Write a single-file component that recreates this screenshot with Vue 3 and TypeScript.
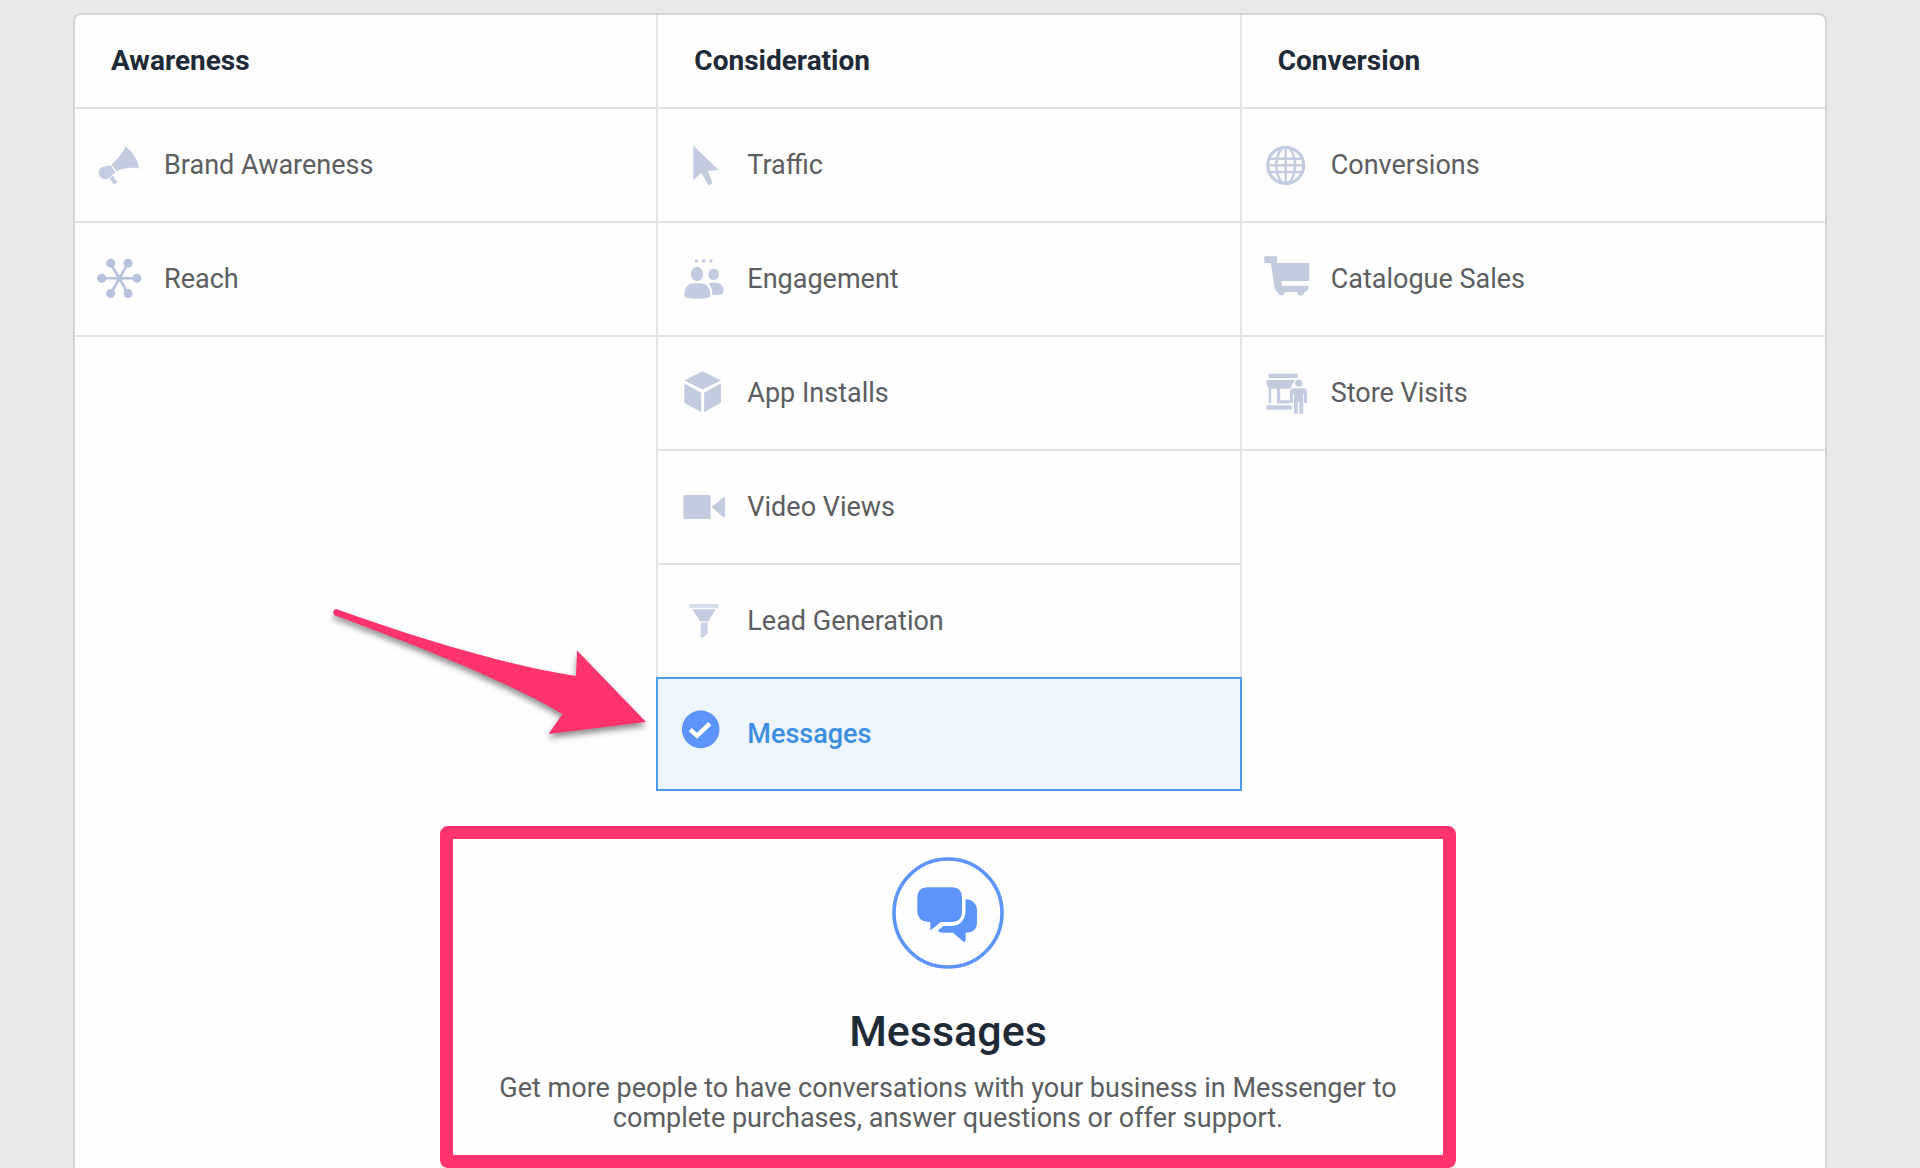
<script setup lang="ts">
import { ref } from 'vue'

type IconName =
  | 'megaphone' | 'reach' | 'cursor' | 'people' | 'cube' | 'video'
  | 'funnel' | 'check' | 'globe' | 'cart' | 'store'

interface Objective { label: string; icon: IconName }
interface Column { title: string; items: Objective[] }

const selected = ref('Messages')

const columns: Column[] = [
  {
    title: 'Awareness',
    items: [
      { label: 'Brand Awareness', icon: 'megaphone' },
      { label: 'Reach', icon: 'reach' },
    ],
  },
  {
    title: 'Consideration',
    items: [
      { label: 'Traffic', icon: 'cursor' },
      { label: 'Engagement', icon: 'people' },
      { label: 'App Installs', icon: 'cube' },
      { label: 'Video Views', icon: 'video' },
      { label: 'Lead Generation', icon: 'funnel' },
      { label: 'Messages', icon: 'check' },
    ],
  },
  {
    title: 'Conversion',
    items: [
      { label: 'Conversions', icon: 'globe' },
      { label: 'Catalogue Sales', icon: 'cart' },
      { label: 'Store Visits', icon: 'store' },
    ],
  },
]

const reachDots: [number, number][] = [
  [6.7, 23.3], [42, 23.3], [15.7, 8.3], [33, 8.3], [15.7, 38.5], [33, 38.5],
]
</script>

<template>
  <main class="page">
    <div class="card">
      <div class="columns">
        <section v-for="column in columns" :key="column.title" class="column">
          <h2 class="column-title">{{ column.title }}</h2>
          <ul class="list">
            <li v-for="item in column.items" :key="item.label" class="entry">
              <button
                type="button"
                class="objective"
                :class="{ selected: item.label === selected }"
                :aria-pressed="item.label === selected"
                @click="selected = item.label"
              >
                <svg class="icon" viewBox="0 0 48 48" aria-hidden="true">
                  <g v-if="item.icon === 'megaphone'">
                    <path d="M30.7 5.5C38 11 43 19 44 27.6C36 26 28 27 21.6 30.6L16.6 23.4C22 19 27 13 30.7 5.5Z" />
                    <path d="M15.8 24.2L20.4 31.6L14.6 36.2A6.4 6.4 0 1 1 9.2 25.4Z" />
                    <path d="M14.6 37.2L18.2 34.8L20.2 38.8L22.4 40.2L21 42.8L18.4 42.8Z" />
                  </g>
                  <g v-else-if="item.icon === 'reach'" class="reach">
                    <path d="M6.7 23.3H42M15.7 8.3L33 38.5M33 8.3L15.7 38.5" fill="none" stroke="currentColor" stroke-width="2.6" />
                    <circle cx="24.3" cy="23.3" r="3.4" />
                    <circle v-for="(dot, i) in reachDots" :key="i" :cx="dot[0]" :cy="dot[1]" r="4.5" />
                  </g>
                  <path v-else-if="item.icon === 'cursor'" d="M15.3 4.5L40.5 29L29.7 29.9L34.5 41.8L31 44.7L23.3 31.7L15.3 39.5Z" />
                  <g v-else-if="item.icon === 'people'">
                    <circle cx="18.3" cy="6" r="1.7" />
                    <circle cx="25.7" cy="6" r="1.9" />
                    <circle cx="33" cy="6" r="1.7" />
                    <ellipse cx="19" cy="19" rx="6.2" ry="7.2" />
                    <ellipse cx="35.7" cy="19.4" rx="5.2" ry="5.8" />
                    <path d="M6.3 39C6.3 32.5 10.5 28.3 15.5 28.3H23C28 28.3 32.3 32.5 32.3 39V40.5C32.3 42.6 29 43.7 19.3 43.7C9.5 43.7 6.3 42.6 6.3 40.5Z" />
                    <path d="M30.5 28.4C32 27.8 33.5 27.7 35 27.7H38C42.5 27.7 45.7 31 45.7 35.5V36.5C45.7 39.4 41.5 40.2 34.2 40C34.4 35 33.5 31.5 30.5 28.4Z" />
                  </g>
                  <g v-else-if="item.icon === 'cube'">
                    <path d="M24.7 2.3L43 11.4L24.7 20.6L6.3 11.4Z" />
                    <path d="M6.3 14.6L23.2 23.7V43.2L6.3 33.8Z" />
                    <path d="M43 14.6L26.1 23.7V43.2L43 33.8Z" />
                  </g>
                  <g v-else-if="item.icon === 'video'">
                    <rect x="5.3" y="12" width="27.4" height="24" rx="1" />
                    <path d="M33.6 24L44 15.4L47 13.7V35L44 33Z" />
                  </g>
                  <g v-else-if="item.icon === 'funnel'">
                    <rect x="11.3" y="7" width="29" height="3.8" opacity="0.7" />
                    <path d="M14.3 12.2H37.8L30.4 24.2H22Z" />
                    <path d="M22.7 25.6H29.7V36.4L25.2 40.4H22.7Z" opacity="0.85" />
                  </g>
                  <g v-else-if="item.icon === 'check'">
                    <circle cx="22.7" cy="19.4" r="18.8" class="check-disc" />
                    <path d="M12.2 19.6L19 25.8L31.8 13.6" fill="none" stroke="#fff" stroke-width="4.4" />
                  </g>
                  <g v-else-if="item.icon === 'globe'" fill="none" stroke="currentColor" stroke-width="2.4">
                    <circle cx="23.7" cy="24.3" r="18" stroke-width="3.2" />
                    <ellipse cx="23.7" cy="24.3" rx="9.4" ry="18" />
                    <path d="M23.7 6V42.6M5.7 24.3H41.7M8.2 17.8H39.2M8.2 31H39.2" />
                  </g>
                  <path
                    v-else-if="item.icon === 'cart'"
                    d="M2.3 1.3H15V8H47.3V26H19.7V30.7H46.8L45.6 35.4L43.5 37H42.2A3.4 3.4 0 0 1 35.4 37.4L34.5 37H23.6L22.5 38A3.4 3.4 0 0 1 16 38L13 34.6L8.8 8H2.3Z"
                  />
                  <g v-else-if="item.icon === 'store'">
                    <path d="M6.6 4.7H36V8.9H6.6ZM4.5 11H33L30 15.7L28.5 19.7H9.2V34.3H6.6V19L4.5 15.7Z" />
                    <path d="M15 19V34.5H27.6V31.2H18.2V19ZM4.5 36.3H29.8V40.8H4.5Z" />
                    <circle cx="36.8" cy="14.2" r="3.6" />
                    <path d="M32 19.3H41.4C43.8 19.3 45 20.8 45 23V34H42V25H41.2V44.8H37.3V33H35.8V44.8H32V25H31V34H27.8V23C27.8 20.8 29.4 19.3 32 19.3Z" />
                  </g>
                </svg>
                <span>{{ item.label }}</span>
              </button>
            </li>
          </ul>
        </section>
      </div>

      <section class="detail">
        <svg class="badge" viewBox="0 0 112 112" aria-hidden="true">
          <circle cx="56" cy="56" r="54" fill="none" stroke="currentColor" stroke-width="3.6" />
          <path d="M36 30.3H59.5Q70 30.3 70 41V54Q70 65 59.5 65H49L38.3 73.5V65H36Q25.3 64 25.3 54V41Q25.3 30.3 36 30.3Z" />
          <path d="M73.5 42.3C80 42.3 85 47 85 53V65Q85 75.7 73.7 75.7V83.5Q73 86 70.8 84.3L61 75.7H52Q46.5 75.7 46 73.2L51.5 69H60C68 68.5 73.5 63 73.5 54Z" />
        </svg>
        <h1 class="detail-title">Messages</h1>
        <p class="detail-text">
          Get more people to have conversations with your business in Messenger to
          complete purchases, answer questions or offer support.
        </p>
      </section>

      <svg class="arrow" viewBox="0 0 330 150" aria-hidden="true">
        <path d="M11 9C90 37 175 64 251 76L252 50.5L321 122L223.5 134L237.5 114C180 80 85 43 10 15.5A3.5 3.5 0 0 1 11 9Z" />
      </svg>
    </div>
  </main>
</template>

<style>
body {
  margin: 0;
  background: #e8e9eb;
}
</style>

<style scoped>
.page {
  box-sizing: border-box;
  display: flex;
  flex-direction: column;
  min-height: 100vh;
  padding: 13px 93px 0 73px;
  font-family: Roboto, "Liberation Sans", sans-serif;
  font-size: 27px;
  color: #5b5d60;
}

.card {
  box-sizing: border-box;
  position: relative;
  flex: 1;
  background: #fefefe;
  border: 2px solid #d2d4d6;
  border-bottom: 0;
  border-radius: 8px 8px 0 0;
}

.columns {
  display: grid;
  grid-template-columns: repeat(3, minmax(0, 1fr));
}

.column + .column {
  margin-left: -2px;
  border-left: 2px solid #e3e5e6;
}

.column-title {
  margin: 0;
  padding: 26px 36px;
  border-bottom: 2px solid #e0e2e3;
  font-size: 28px;
  font-weight: 700;
  line-height: 40px;
  color: #1f2a37;
}

.list {
  margin: 0;
  padding: 0;
  list-style: none;
}

.objective {
  box-sizing: border-box;
  display: flex;
  align-items: center;
  gap: 21px;
  width: 100%;
  height: 114px;
  padding: 0 20px;
  background: none;
  border: 0;
  border-bottom: 2px solid #e0e2e3;
  font: inherit;
  color: inherit;
  text-align: left;
  cursor: pointer;
}

.objective.selected {
  position: relative;
  z-index: 1;
  width: calc(100% + 2px);
  margin: -2px 0 0 -2px;
  border: 2px solid #4c9be8;
  background: #edf5fd;
  font-weight: 500;
  color: #3b8ee0;
}

.icon {
  flex: none;
  width: 48px;
  height: 48px;
  color: #c3ccdf;
  fill: currentColor;
}

.reach {
  color: #b7c2dc;
  fill: currentColor;
}

.check-disc {
  fill: #5c94fa;
}

.detail {
  box-sizing: border-box;
  display: flex;
  flex-direction: column;
  align-items: center;
  width: calc(100% - 734px);
  min-width: 1016px;
  margin: 35px auto 0 365px;
  padding: 18px 20px 22px;
  border: 13px solid #ff336d;
  border-radius: 8px;
  text-align: center;
}

.badge {
  width: 112px;
  height: 112px;
  color: #5c94fa;
  fill: currentColor;
}

.detail-title {
  margin: 34px 0 14px;
  font-size: 43px;
  font-weight: 500;
  line-height: 56px;
  color: #1f2a37;
}

.detail-text {
  max-width: 920px;
  margin: 0;
  line-height: 30px;
}

.arrow {
  position: absolute;
  top: 585px;
  left: 250px;
  width: 330px;
  height: 150px;
  overflow: visible;
  fill: #ff336d;
  filter: drop-shadow(0 4px 3px rgba(0, 0, 0, 0.45));
  pointer-events: none;
}
</style>
